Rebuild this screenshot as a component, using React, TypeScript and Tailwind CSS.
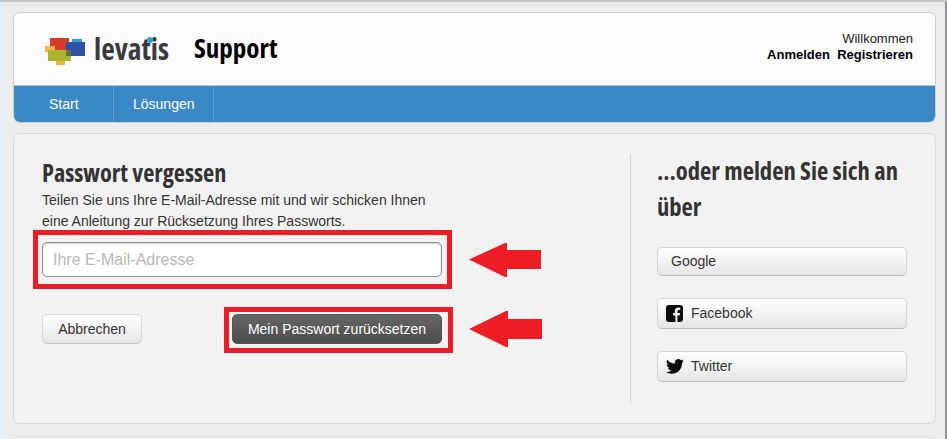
import React from "react";

const sans = "font-['Liberation_Sans',Arial,sans-serif]";
const cond = "font-['Open_Sans',sans-serif] font-bold [font-stretch:75%]";

function Logo() {
  return (
    <svg width="41" height="27" viewBox="45 38 41 27" className="block mt-[5px] [filter:blur(0.3px)]">
      <rect x="72" y="39" width="10" height="4" fill="#2aa5c9" />
      <rect x="50" y="38" width="19" height="12" fill="#d83a2a" />
      <rect x="66" y="42" width="19" height="14" fill="#2f52a5" />
      <rect x="45" y="46" width="10" height="6" fill="#f6b54d" />
      <rect x="48" y="50" width="23" height="11" fill="#a9b42c" />
      <rect x="66" y="50" width="5" height="6" fill="#5f7440" />
      <rect x="56" y="61" width="9" height="4" fill="#f7b32b" />
    </svg>
  );
}

function TwitterIcon() {
  return (
    <svg width="18" height="15" viewBox="0 0 24 20" className="block">
      <path d="M24 2.4a9.8 9.8 0 0 1-2.8.8A4.9 4.9 0 0 0 23.3.5a9.800 9.800 0 0 1-3.100 1.200A4.900 4.900 0 0 0 11.800 6.200 13.900 13.900 0 0 1 1.700.9a4.900 4.900 0 0 0 1.500 6.600A4.900 4.900 0 0 1 1 6.900v.1a4.900 4.900 0 0 0 3.900 4.800 4.900 4.900 0 0 1-2.200.1 4.900 4.900 0 0 0 4.600 3.400A9.900 9.900 0 0 1 0 17.400 13.900 13.900 0 0 0 7.500 19.600c9.100 0 14-7.500 14-14v-.6A10 10 0 0 0 24 2.400z" fill="#0b0b0b" />
    </svg>
  );
}

function FacebookIcon() {
  return (
    <svg width="17" height="17" viewBox="0 0 17 17" className="block">
      <path d="M3 0h11a3 3 0 0 1 3 3v11a3 3 0 0 1-3 3h-2.500v-6.500h2.200l.4-2.600h-2.600V6.300c0-.8.3-1.300 1.300-1.300h1.400V2.700c-.3 0-1.100-.1-2-.1-2 0-3.300 1.200-3.300 3.400v1.900H7.100v2.600h2.300V17H3a3 3 0 0 1-3-3V3a3 3 0 0 1 3-3z" fill="#0b0b0b" />
    </svg>
  );
}

function Social({ label, icon, h }: { label: string; icon?: React.ReactNode; h: string }) {
  return (
    <div className={`${h} w-[250px] rounded-[5px] border border-[#d6d6d6] border-b-[#bdbdbd] bg-gradient-to-b from-white to-[#e6e6e6] flex items-center text-[14px] text-[#333] ${icon ? "pl-[8px]" : "pl-[13px]"}`}>
      {icon && <span className="w-[25px] shrink-0">{icon}</span>}
      <span>{label}</span>
    </div>
  );
}

export default function App() {
  return (
    <div className={`${sans} w-[947px] h-[439px] overflow-hidden bg-[#ededed] border-t-2 border-[#c3c7ca] pl-[13px] pt-[10px] relative`}>
      <div className="absolute left-0 top-0 bottom-0 w-[3px] bg-[#e6eff5]" />
      <div className="absolute right-0 top-0 bottom-0 w-[2px] bg-[#8d969c]" />
      <div className="w-[923px] h-[111px] rounded-[7px] border border-[#cfcfcf] bg-[#fcfcfc] overflow-hidden flex flex-col">
        <div className="h-[73px] flex items-start justify-between pl-[31px] pr-[22px] border-b border-[#b5c9d8]">
          <div className="flex items-center pt-[20px]">
            <Logo />
            <span className="relative ml-[8px] text-[29.500px] leading-[30px] text-[#3a3a3c] font-['Open_Sans',sans-serif] [font-stretch:75%] font-bold">
              levatis
              <span className="absolute left-[53px] top-[3px] w-[6px] h-[6px] rounded-full bg-[#2aa5c9]" />
            </span>
            <span className={`${cond} -mt-[2px] ml-[25px] text-[27px] leading-[30px] text-black`}>Support</span>
          </div>
          <div className="pt-[18px] text-right text-[13px] leading-[16px] text-[#222]">
            <div>Willkommen</div>
            <div className="font-bold text-black">Anmelden&nbsp; Registrieren</div>
          </div>
        </div>
        <div className="flex-1 bg-[#3a89c5] flex text-[14px] text-white">
          <div className="w-[100px] border-r border-[#5f9fd0] flex items-center pl-[35px]">Start</div>
          <div className="w-[100px] border-r border-[#5f9fd0] flex items-center pl-[19px]">Lösungen</div>
        </div>
      </div>

      <div className="mt-[10px] w-[923px] h-[291px] rounded-[7px] border border-[#d9d9d9] bg-[#f2f2f2] flex relative">
        <div className="w-[616px] pl-[28px] pt-[24px]">
          <h1 className={`${cond} text-[24.3px] leading-[30px] text-[#333]`}>Passwort vergessen</h1>
          <p className="mt-[2px] text-[14px] leading-[21px] text-[#333]">
            Teilen Sie uns Ihre E-Mail-Adresse mit und wir schicken Ihnen<br />eine Anleitung zur Rücksetzung Ihres Passworts.
          </p>
          <div className="relative -mt-[2px] -ml-[9px] w-[419px] h-[59px] border-[5px] border-[#ee1c25] pl-[4px] pr-[5px] flex items-center">
            <input
              readOnly
              placeholder="Ihre E-Mail-Adresse"
              className="w-full h-[35px] rounded-[5px] bg-white border border-[#8f8f8f] px-[10px] text-[16px] text-[#333] placeholder:text-[#b8b8b8] shadow-[inset_0_1px_2px_rgba(0,0,0,0.2)] outline-none"
            />
            <svg width="72" height="34" viewBox="0 0 72 34" className="absolute left-[431px] top-[8px] block">
              <path d="M0 16.500 L36 0 H38 V7 H72 V26 H38 V34 H36 Z" fill="#ee1c25" />
            </svg>
          </div>
          <div className="mt-[18px] w-[400px] flex items-start justify-between">
            <button className="mt-[7px] h-[30px] w-[100px] rounded-[5px] border border-[#d9d9d9] border-b-[#c4c4c4] bg-gradient-to-b from-white to-[#e6e6e6] text-[14px] text-[#333]">Abbrechen</button>
            <div className="relative w-[229px] h-[46px] shrink-0 border-[5px] border-[#ee1c25] pl-[3px] pt-[2px] -mr-[11px]">
              <button className="block w-[210px] h-[30px] rounded-[5px] bg-gradient-to-b from-[#666] to-[#4c4c4c] border border-[#555] text-[14px] text-white">Mein Passwort zurücksetzen</button>
              <svg width="73" height="36" viewBox="0 0 73 36" className="absolute left-[240px] -top-[1px] block">
                <path d="M0 18 L37 0 H39 V8 H73 V28 H39 V36 H37 Z" fill="#ee1c25" />
              </svg>
            </div>
          </div>
        </div>
        <div className="my-[20px] border-l border-[#d4d4d4] pl-[26px] flex flex-col">
          <h2 className={`${cond} -mt-[1px] text-[24.6px] leading-[36px] text-[#333] w-[260px]`}>...oder melden Sie sich an über</h2>
          <div className="mt-[22px] flex flex-col gap-[22px]">
            <Social label="Google" h="h-[29px]" />
            <Social label="Facebook" h="h-[31px]" icon={<FacebookIcon />} />
            <Social label="Twitter" h="h-[31px]" icon={<TwitterIcon />} />
          </div>
        </div>
      </div>

      <div className="mt-[12px] w-[923px] h-[20px] rounded-[7px] border border-[#d9d9d9] bg-[#f2f2f2]" />
    </div>
  );
}
